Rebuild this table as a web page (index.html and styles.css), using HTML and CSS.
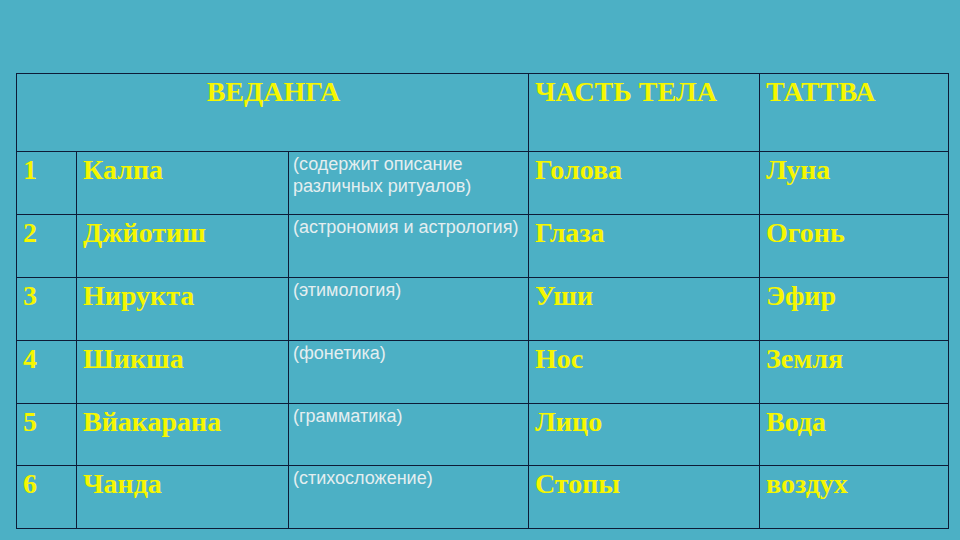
FILE: index.html
```html
<!DOCTYPE html>
<html lang="ru">
<head>
<meta charset="utf-8">
<title>Веданга</title>
<link rel="stylesheet" href="styles.css">
</head>
<body>
<div class="slide">
  <table class="vedanga">
    <colgroup>
      <col class="c-num"><col class="c-name"><col class="c-desc"><col class="c-part"><col class="c-tattva">
    </colgroup>
    <tr class="head">
      <td colspan="3" class="center">ВЕДАНГА</td>
      <td>ЧАСТЬ ТЕЛА</td>
      <td>ТАТТВА</td>
    </tr>
    <tr class="row">
      <td>1</td><td>Калпа</td><td class="desc">(содержит описание различных ритуалов)</td><td>Голова</td><td>Луна</td>
    </tr>
    <tr class="row">
      <td>2</td><td>Джйотиш</td><td class="desc">(астрономия и астрология)</td><td>Глаза</td><td>Огонь</td>
    </tr>
    <tr class="row">
      <td>3</td><td>Нирукта</td><td class="desc">(этимология)</td><td>Уши</td><td>Эфир</td>
    </tr>
    <tr class="row">
      <td>4</td><td>Шикша</td><td class="desc">(фонетика)</td><td>Нос</td><td>Земля</td>
    </tr>
    <tr class="row short">
      <td>5</td><td>Вйакарана</td><td class="desc">(грамматика)</td><td>Лицо</td><td>Вода</td>
    </tr>
    <tr class="row">
      <td>6</td><td>Чанда</td><td class="desc">(стихосложение)</td><td>Стопы</td><td>воздух</td>
    </tr>
  </table>
</div>
</body>
</html>
```
FILE: styles.css
```css
html, body {
  margin: 0;
  padding: 0;
}
body {
  background: #4cb0c5;
  width: 960px;
  height: 540px;
  overflow: hidden;
}
.slide {
  padding: 73px 0 0 16px;
}
.vedanga {
  border-collapse: collapse;
  table-layout: fixed;
  width: 932px;
}
.c-num { width: 60px; }
.c-name { width: 212px; }
.c-desc { width: 240px; }
.c-part { width: 231px; }
.c-tattva { width: 189px; }
.vedanga td {
  border: 1px solid #0d1b36;
  vertical-align: top;
  padding: 2px 4px 0 6px;
  font-family: "Liberation Serif", "Times New Roman", serif;
  font-weight: bold;
  font-size: 28px;
  line-height: 32px;
  color: #f6f600;
  box-sizing: border-box;
}
.vedanga td.center {
  text-align: center;
}
.head td {
  height: 78px;
  padding-top: 2px;
}
.row td {
  height: 63px;
}
.row.short td {
  height: 62px;
}
.vedanga td.desc {
  font-family: "Liberation Sans", Arial, sans-serif;
  font-weight: normal;
  font-size: 18px;
  line-height: 22px;
  color: #e4eef0;
  padding: 1px 2px 0 4px;
}
```
